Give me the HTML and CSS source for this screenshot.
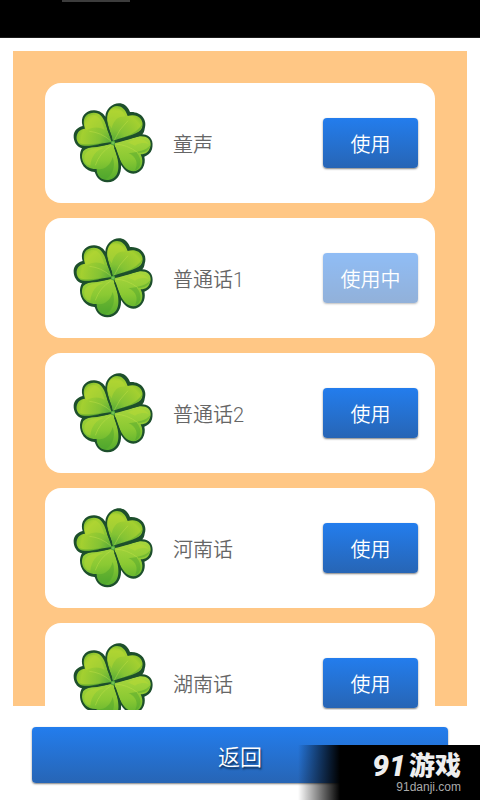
FILE: index.html
```
<!DOCTYPE html>
<html lang="zh-CN">
<head>
	<meta charset="UTF-8">
	<meta name="viewport" content="width=device-width, initial-scale=1">
	<title>使用</title>
	<link rel="stylesheet" href="styles.css">
</head>
<body>
	<!-- clover, shared by every row -->
	<svg class="defs" aria-hidden="true">
		<defs>
			<radialGradient id="leaf" gradientUnits="userSpaceOnUse" cx="147" cy="147" r="120">
				<stop offset="0" stop-color="#4ea638"/>
				<stop offset="0.35" stop-color="#84c334"/>
				<stop offset="0.8" stop-color="#a4d030"/>
				<stop offset="1" stop-color="#78ba2c"/>
			</radialGradient>
			<linearGradient id="lowleaf" gradientUnits="userSpaceOnUse" x1="150" y1="135" x2="155" y2="258">
				<stop offset="0" stop-color="#a6d53c"/>
				<stop offset="0.5" stop-color="#8ac933"/>
				<stop offset="1" stop-color="#55ac2e"/>
			</linearGradient>
			<symbol id="clover" viewBox="0 -3 300 300">
				<path fill="#1d4f2c" d="M124 68C126 30 180 8 198 54C232 52 251 78 242 104C241 112 239 116 235 121C262 122 270 144 264 166C260 178 251 185 241 188C247 212 233 238 208 239C192 239 181 228 171 213C173 242 157 266 129 265C108 264 97 249 92 234C64 232 47 208 48 182C49 174 51 168 54 163C37 159 28 141 29 124C30 110 42 99 56 96C47 69 65 48 91 49C108 50 118 59 124 68Z"/>
				<path fill="url(#leaf)" d="M147 141L131 90C119 32 176 15 191 66C223 57 242 79 234 101C227 121 190 123 147 141Z"/>
				<path fill="url(#leaf)" d="M143 144L127 96C119 68 106 55 88 56C64 57 53 75 63 104C34 107 31 140 49 152C71 162 106 147 143 144Z"/>
				<path fill="url(#lowleaf)" d="M150 148C182 142 203 132 228 127C249 126 261 136 260 153C257 173 245 181 230 181C243 208 230 232 208 232C177 231 164 191 150 148Z"/>
				<path fill="url(#lowleaf)" d="M147 149C112 157 73 154 58 171C46 195 62 227 98 225C98 251 119 261 137 257C176 247 165 196 147 149Z"/>
				<g fill="#c0dc35" opacity="0.4">
					<path d="M131 67C137 34 173 36 184 68C164 66 150 76 143 103C135 92 129 80 131 67Z"/>
					<path d="M66 108C57 81 68 62 88 63C108 66 115 84 122 108C98 94 83 103 66 108Z"/>
					<path d="M191 145C218 132 245 132 254 151C244 145 225 145 213 155Z"/>
					<path d="M62 183C71 164 97 162 119 162C97 168 82 187 79 215C65 214 58 200 62 183Z"/>
				</g>
				<g fill="#459f2d" opacity="0.4">
					<path d="M42 146C62 154 92 151 120 145C91 160 60 160 49 152Z"/>
					<path d="M167 134C197 126 221 112 235 91C235 115 206 125 167 134Z"/>
					<path d="M260 152C257 169 240 178 218 176C236 195 232 223 212 230C225 209 216 187 194 178C222 173 247 170 260 152Z"/>
					<path d="M98 224C115 230 139 218 146 189C157 220 143 250 121 256C108 251 99 240 98 224Z"/>
				</g>
				<g fill="none" stroke="#d0e850" stroke-width="3" opacity="0.35">
					<path d="M151 138Q164 107 192 80"/>
					<path d="M141 141Q111 115 76 112"/>
					<path d="M157 151Q187 151 222 176"/>
					<path d="M141 155Q107 176 94 214"/>
				</g>
				<g fill="none" stroke="#1d4f2c" stroke-width="5" stroke-linecap="round">
					<path d="M127 84Q131 108 142 130"/>
					<path d="M163 140Q190 134 230 122"/>
					<path d="M60 159Q95 160 131 150"/>
					<path d="M153 162Q160 182 169 208"/>
				</g>
				<circle cx="147" cy="147" r="7" fill="#4fa83a"/>
				<circle cx="147" cy="147" r="4" fill="#72bd55"/>
			</symbol>
		</defs>
	</svg>

	<header class="topbar"><span class="indicator"></span></header>

	<main class="panel">
		<ul class="voices">
			<li class="voice">
				<svg class="clover" aria-hidden="true"><use href="#clover"/></svg>
				<span class="name">童声</span>
				<button type="button" class="btn use">使用</button>
			</li>
			<li class="voice">
				<svg class="clover" aria-hidden="true"><use href="#clover"/></svg>
				<span class="name">普通话1</span>
				<button type="button" class="btn use" disabled>使用中</button>
			</li>
			<li class="voice">
				<svg class="clover" aria-hidden="true"><use href="#clover"/></svg>
				<span class="name">普通话2</span>
				<button type="button" class="btn use">使用</button>
			</li>
			<li class="voice">
				<svg class="clover" aria-hidden="true"><use href="#clover"/></svg>
				<span class="name">河南话</span>
				<button type="button" class="btn use">使用</button>
			</li>
			<li class="voice">
				<svg class="clover" aria-hidden="true"><use href="#clover"/></svg>
				<span class="name">湖南话</span>
				<button type="button" class="btn use">使用</button>
			</li>
		</ul>
	</main>

	<footer class="bottom">
		<button type="button" class="btn back">返回</button>
	</footer>

	<div class="watermark">
		<div class="brand"><span class="digits">91</span><span>游戏</span></div>
		<div class="site">91danji.com</div>
	</div>
</body>
</html>
```
FILE: styles.css
```
* {
	box-sizing: border-box;
}

body {
	display: flex;
	flex-direction: column;
	height: 100vh;
	margin: 0;
	overflow: hidden;
	background-color: #fff;
	font-family: Roboto, "Noto Sans CJK SC", sans-serif;
}

.defs {
	position: absolute;
	width: 0;
	height: 0;
}

.topbar {
	flex: none;
	height: 38px;
	padding-left: 62px;
	background-color: #000;
	border-bottom: 1px solid #1c1c1c;
}

.indicator {
	display: block;
	width: 68px;
	height: 2px;
	background-color: #3c3c3c;
}

/* the orange stops a little above the point where the rows are cut off */
.panel {
	flex: 1;
	min-height: 0;
	margin: 13px 13px 0;
	padding: 32px 32px 0;
	overflow: hidden;
	background: linear-gradient(#ffc785, #ffc785) no-repeat;
	background-size: 100% calc(100% - 4px);
}

.voices {
	display: flex;
	flex-direction: column;
	gap: 15px;
	margin: 0;
	padding: 0;
	list-style: none;
}

.voice {
	display: flex;
	align-items: center;
	height: 120px;
	padding: 0 17px 0 19px;
	background-color: #fff;
	border-radius: 16px;
}

.clover {
	flex: none;
	width: 100px;
	height: 100px;
}

.name {
	flex: 1;
	margin-left: 9px;
	padding-top: 3px;
	font-size: 20px;
	font-weight: 350;
	line-height: 24px;
	color: #666;
}

.btn {
	padding: 0;
	border: none;
	border-radius: 4px;
	font-family: inherit;
	font-weight: 350;
	color: #fff;
	background: linear-gradient(#237ded, #2765b5);
	box-shadow: 0 1px 2px rgba(0, 0, 0, 0.5);
	cursor: pointer;
}

.btn:active {
	background: #2765b5;
}

.btn:disabled {
	opacity: 0.5;
	cursor: default;
}

.use {
	width: 95px;
	height: 50px;
	font-size: 20px;
}

.bottom {
	flex: none;
	padding: 17px 32px;
}

.back {
	display: block;
	width: 100%;
	height: 56px;
	font-size: 22px;
	text-shadow: 1px 2px 2px rgba(0, 0, 0, 0.6);
}

.watermark {
	position: absolute;
	right: 0;
	bottom: 0;
	width: 182px;
	height: 55px;
	padding: 7px 19px 0 0;
	background: linear-gradient(to right, transparent, #000 42px);
	text-align: right;
}

.brand {
	display: flex;
	justify-content: flex-end;
	align-items: center;
	gap: 3px;
	font-size: 26px;
	font-weight: 900;
	line-height: 28px;
	color: #eee;
}

.digits {
	font-size: 30px;
	font-style: italic;
}

.site {
	font-family: "Liberation Sans", sans-serif;
	font-size: 12px;
	line-height: 14px;
	color: #aaa;
}
```
